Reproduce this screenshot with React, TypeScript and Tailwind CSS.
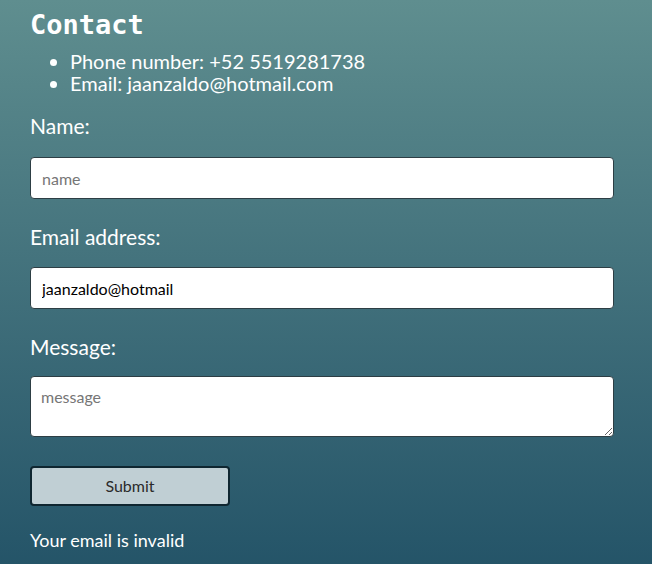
import React, { useState } from "react";

const font = { fontFamily: "Lato, 'Noto Sans', sans-serif" };

export default function App() {
  const [email, setEmail] = useState("jaanzaldo@hotmail");

  return (
    <div
      className="min-h-[564px] w-full bg-gradient-to-b from-[#5f8e8f] to-[#245468] px-[30px] pt-[8px] pb-4 text-white"
      style={font}
    >
      <h2 className="text-[27px] font-bold leading-[34px] font-['DejaVu_Sans_Mono',monospace]">
        Contact
      </h2>
      <ul className="ml-[40px] mt-[8px] list-disc text-[20px] leading-[22px]">
        <li>Phone number: +52 5519281738</li>
        <li>Email: jaanzaldo@hotmail.com</li>
      </ul>
      <form className="mt-[18px]" onSubmit={(e) => e.preventDefault()}>
        <label className="block text-[21px] leading-[28px]">Name:</label>
        <input
          className="mt-[17px] block h-[42px] w-[584px] rounded-[4px] border border-[#2d3e44] bg-white px-[11px] text-[16px] text-black placeholder:text-[#767676] outline-none"
          placeholder="name"
        />
        <label className="mt-[24px] block text-[21px] leading-[28px]">Email address:</label>
        <input
          className="mt-[16px] block h-[42px] w-[584px] rounded-[4px] border border-[#2d3e44] bg-white px-[11px] text-[16px] text-black placeholder:text-[#767676] outline-none"
          value={email}
          onChange={(e) => setEmail(e.target.value)}
        />
        <label className="mt-[24px] block text-[21px] leading-[28px]">Message:</label>
        <textarea
          className="mt-[15px] block h-[61px] w-[584px] rounded-[4px] border border-[#2d3e44] bg-white px-[10px] py-[9px] text-[16px] leading-[22px] text-black placeholder:text-[#767676] outline-none"
          placeholder="message"
        />
        <button
          type="submit"
          className="mt-[29px] block h-[40px] w-[200px] rounded-[4px] border-2 border-[#0f2630] bg-[#c0cfd4] text-[16px] text-[#2a2a2a]"
        >
          Submit
        </button>
      </form>
      <p className="mt-[22px] text-[18px] leading-[24px]">Your email is invalid</p>
    </div>
  );
}
